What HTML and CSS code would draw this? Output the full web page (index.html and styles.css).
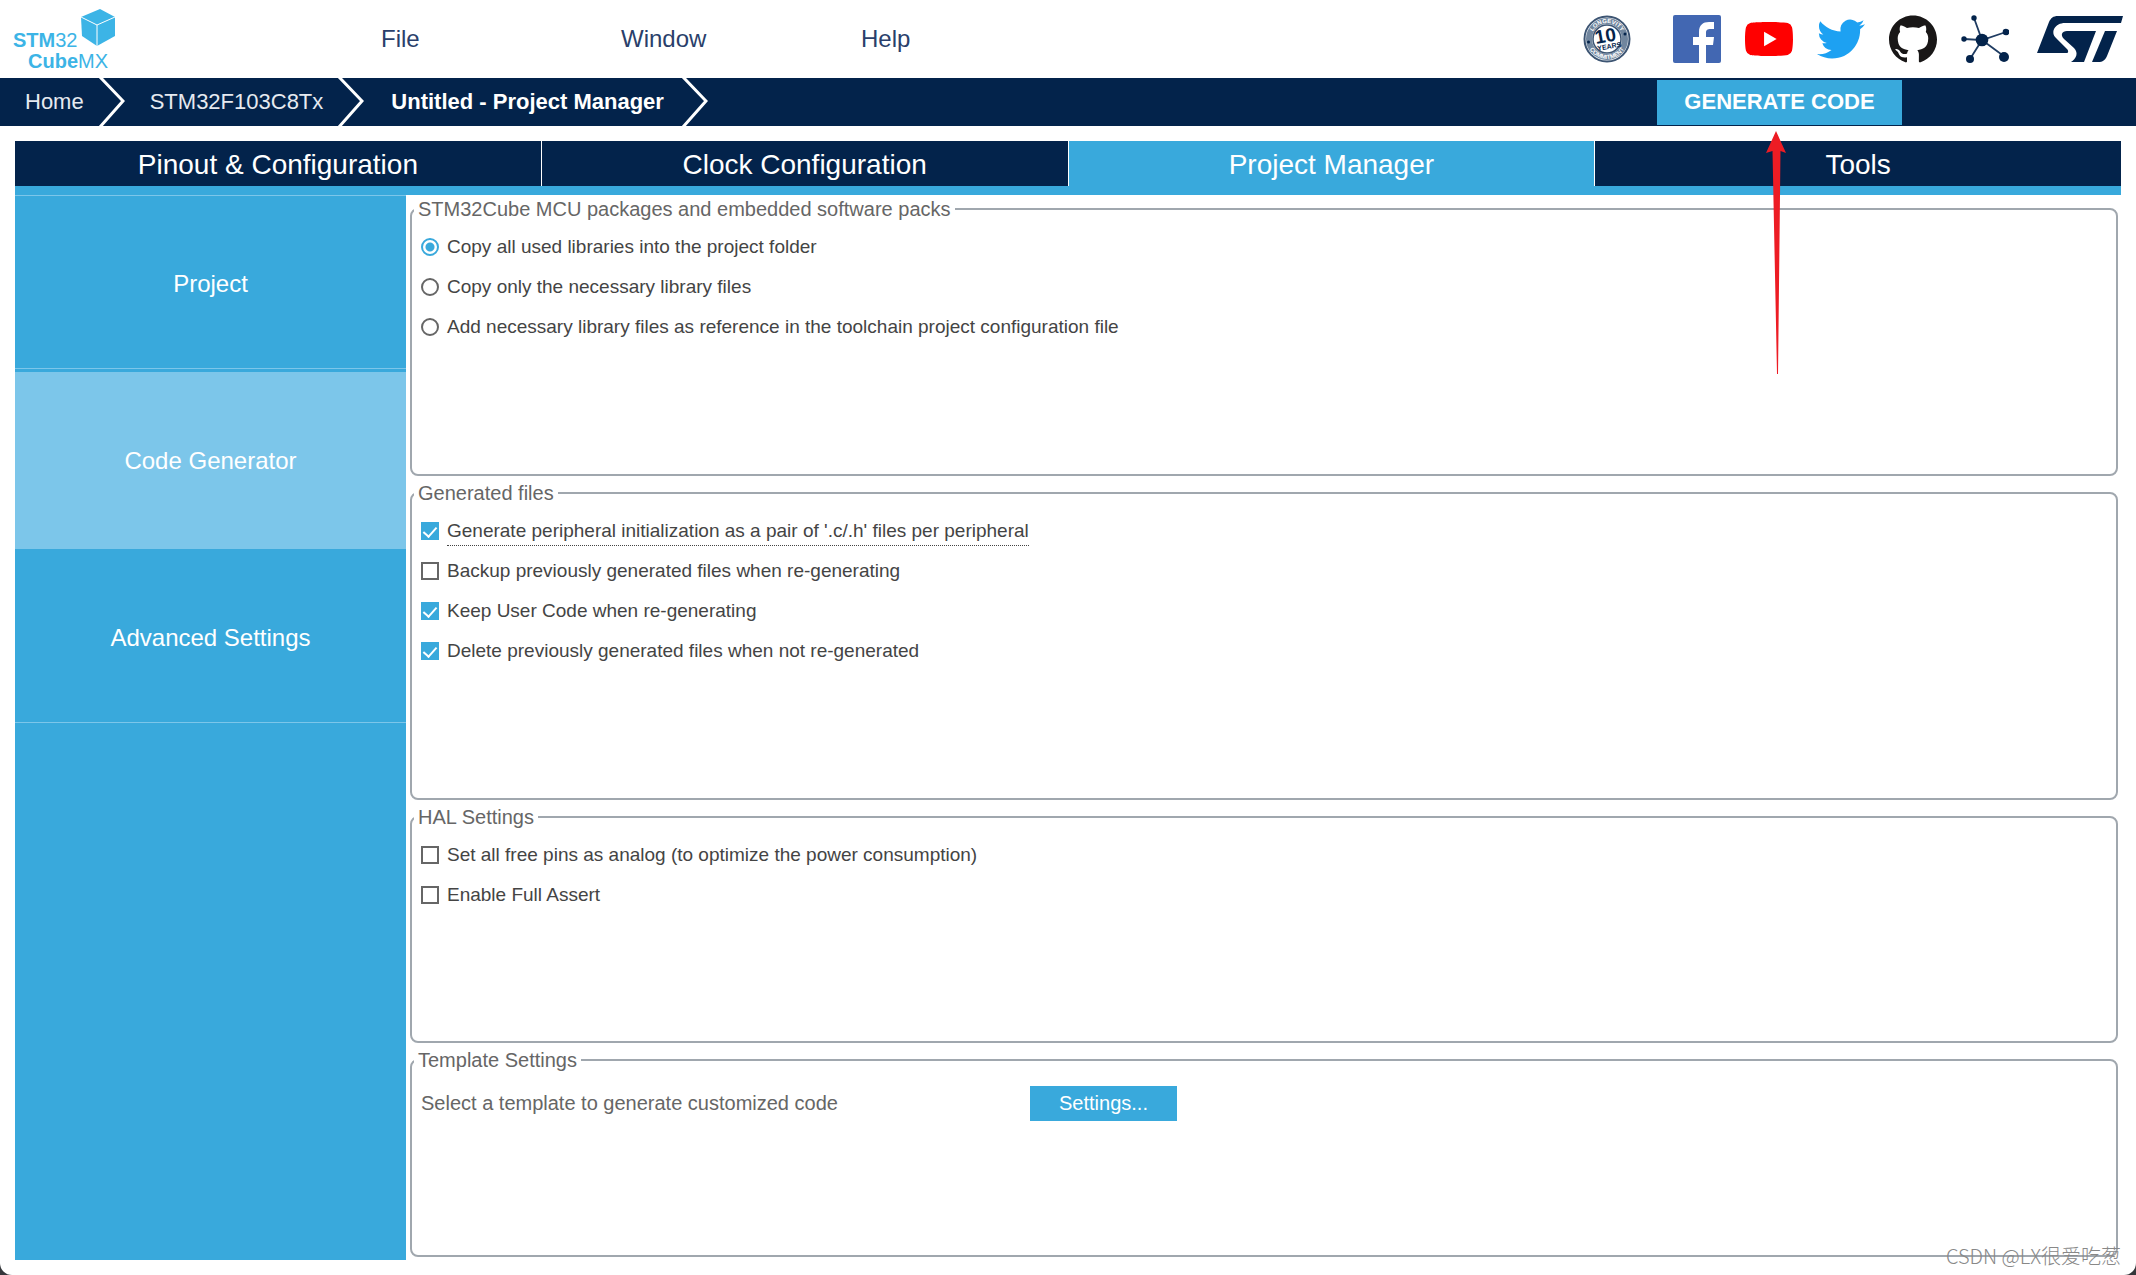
FILE: index.html
```html
<!DOCTYPE html>
<html lang="en">
<head>
<meta charset="utf-8">
<meta name="viewport" content="width=device-width, initial-scale=1">
<title>STM32CubeMX - Project Manager</title>
<link rel="stylesheet" href="styles.css">
</head>
<body>
<div class="app">
  <header class="topbar">
    <a class="logo" href="#" aria-label="STM32CubeMX">
      <svg width="120" height="78" viewBox="0 0 120 78">
        <g fill="#3cb4e6">
          <text class="logo-text" x="13" y="47"><tspan class="logo-bold">STM</tspan>32</text>
          <text class="logo-text" x="28" y="68"><tspan class="logo-bold">Cube</tspan>MX</text>
          <path d="M81 17 100 9 115 17 115 36 97 46 82 36Z"/>
        </g>
        <path d="M81 17 97 25 115 17M97 25V46" fill="none" stroke="#fff" stroke-width="1"/>
      </svg>
    </a>
    <nav class="menu" aria-label="Main menu">
      <a href="#">File</a>
      <a href="#">Window</a>
      <a href="#">Help</a>
    </nav>
    <div class="links">
      <a class="badge" href="#" aria-label="10 years longevity commitment">
        <svg width="48" height="48" viewBox="0 0 48 48">
          <defs>
            <path id="arc-top" d="M8 24a16 16 0 0 1 32 0"/>
            <path id="arc-bottom" d="M4 24a20 20 0 0 0 40 0"/>
          </defs>
          <circle cx="24" cy="24" r="22.500" fill="#f3f6f9" stroke="#3d5573" stroke-width="2"/>
          <circle cx="24" cy="24" r="18" fill="none" stroke="#71869e" stroke-width="6"/>
          <circle cx="24" cy="24" r="14" fill="#fff" stroke="#3d5573" stroke-width="1.500"/>
          <circle cx="5.500" cy="27" r="1.500" fill="#03234b"/>
          <circle cx="42" cy="19" r="1.500" fill="#03234b"/>
          <g fill="#fff" font-size="6" font-weight="bold" text-anchor="middle">
            <text><textPath href="#arc-top" startOffset="50%">LONGEVITY</textPath></text>
            <text><textPath href="#arc-bottom" startOffset="50%">COMMITMENT</textPath></text>
          </g>
          <g fill="#03234b" font-weight="bold" text-anchor="middle" transform="rotate(-10 24 24)">
            <text x="23" y="27" font-size="19">10</text>
            <text x="25" y="34" font-size="7">YEARS</text>
          </g>
        </svg>
      </a>
      <a href="#" aria-label="Facebook">
        <svg width="48" height="48" viewBox="0 0 48 48"><rect width="48" height="48" rx="2" fill="#4267b2"/><path d="M26 48V30h-6v-8h6v-5c0-7 4-10 10-10h5v7h-3c-4 0-5 1-5 4v4h8l-1 8h-7v18z" fill="#fff"/></svg>
      </a>
      <a href="#" aria-label="YouTube">
        <svg width="48" height="48" viewBox="0 0 24 24"><path fill="#f00" d="M23.498 6.186a3.016 3.016 0 0 0-2.122-2.136C19.505 3.545 12 3.545 12 3.545s-7.505 0-9.377.505A3.017 3.017 0 0 0 .502 6.186C0 8.070 0 12 0 12s0 3.930.502 5.814a3.016 3.016 0 0 0 2.122 2.136c1.871.505 9.376.505 9.376.505s7.505 0 9.377-.505a3.015 3.015 0 0 0 2.122-2.136C24 15.930 24 12 24 12s0-3.930-.502-5.814z"/><path fill="#fff" d="M9.545 15.568V8.432L15.818 12z"/></svg>
      </a>
      <a href="#" aria-label="Twitter">
        <svg width="48" height="48" viewBox="0 0 24 24"><path fill="#1da1f2" d="M23.953 4.570a10 10 0 01-2.825.775 4.958 4.958 0 002.163-2.723c-.951.555-2.005.959-3.127 1.184a4.920 4.920 0 00-8.384 4.482C7.690 8.095 4.067 6.130 1.640 3.162a4.822 4.822 0 00-.666 2.475c0 1.710.870 3.213 2.188 4.096a4.904 4.904 0 01-2.228-.616v.060a4.923 4.923 0 003.946 4.827 4.996 4.996 0 01-2.212.085 4.936 4.936 0 004.604 3.417 9.867 9.867 0 01-6.102 2.105c-.390 0-.779-.023-1.170-.067a13.995 13.995 0 007.557 2.209c9.053 0 13.998-7.496 13.998-13.985 0-.210 0-.420-.015-.630A9.935 9.935 0 0024 4.590z"/></svg>
      </a>
      <a href="#" aria-label="GitHub">
        <svg width="48" height="48" viewBox="0 0 24 24"><path fill="#191717" d="M12 .297c-6.630 0-12 5.373-12 12 0 5.303 3.438 9.800 8.205 11.385.600.113.820-.258.820-.577 0-.285-.010-1.040-.015-2.040-3.338.724-4.042-1.610-4.042-1.610C4.422 18.070 3.633 17.700 3.633 17.700c-1.087-.744.084-.729.084-.729 1.205.084 1.838 1.236 1.838 1.236 1.070 1.835 2.809 1.305 3.495.998.108-.776.417-1.305.760-1.605-2.665-.300-5.466-1.332-5.466-5.930 0-1.310.465-2.380 1.235-3.220-.135-.303-.540-1.523.105-3.176 0 0 1.005-.322 3.300 1.230.960-.267 1.980-.399 3-.405 1.020.006 2.040.138 3 .405 2.280-1.552 3.285-1.230 3.285-1.230.645 1.653.240 2.873.120 3.176.765.840 1.230 1.910 1.230 3.220 0 4.610-2.805 5.625-5.475 5.920.420.360.810 1.096.810 2.220 0 1.606-.015 2.896-.015 3.286 0 .315.210.690.825.570C20.565 22.092 24 17.592 24 12.297c0-6.627-5.373-12-12-12"/></svg>
      </a>
      <a href="#" aria-label="ST community">
        <svg width="48" height="48" viewBox="0 0 48 48" fill="#03234b"><path d="M13 3 21 25 45 17M3 24l18 1L9 44M21 25l23 17" fill="none" stroke="#1f3c62" stroke-width="1.800"/><circle cx="21" cy="25" r="6.300"/><circle cx="13" cy="3" r="2.700"/><circle cx="45" cy="17" r="3.300"/><circle cx="3" cy="24" r="2.700"/><circle cx="9" cy="44" r="4"/><circle cx="43" cy="42" r="5"/></svg>
      </a>
      <a class="st" href="#" aria-label="STMicroelectronics">
        <svg width="86" height="48" viewBox="0 0 86 48" fill="#03234b"><path d="M86 1 84 8H28C18 8 13 17 19 23L30 34C32 36 31 38 30 38H0L12 7C14 3 16 1 21 1Z"/><path d="M30 16H59L47 47H34C39 44 42 38 37 33L27 24C23 20 25 16 30 16Z"/><path d="M68 16H80L70 41C68 45 66 47 61 47H55Z"/></svg>
      </a>
    </div>
  </header>

  <div class="crumbbar">
    <nav class="crumbs" aria-label="Breadcrumb">
      <a href="#">Home</a>
      <svg width="27" height="48" viewBox="0 0 27 48"><path d="M2-1 25 23 2 49" /></svg>
      <a href="#">STM32F103C8Tx</a>
      <svg width="27" height="48" viewBox="0 0 27 48"><path d="M2-1 25 23 2 49" /></svg>
      <a class="current" href="#" aria-current="page">Untitled - Project Manager</a>
      <svg width="27" height="48" viewBox="0 0 27 48"><path d="M2-1 25 23 2 49" /></svg>
    </nav>
    <div class="generate-wrap">
      <button class="generate" type="button">GENERATE CODE</button>
      <svg class="arrow" width="22" height="244" viewBox="0 0 22 244"><path d="M10 0 20 22 14.500 20 12 243H11L6.500 20 0 22Z" fill="#ed1c24"/></svg>
    </div>
  </div>

  <main class="workspace">
    <nav class="tabs" aria-label="Views">
      <button type="button">Pinout &amp; Configuration</button>
      <button type="button">Clock Configuration</button>
      <button class="active" type="button">Project Manager</button>
      <button type="button">Tools</button>
    </nav>
    <div class="body">
      <nav class="side" aria-label="Project manager sections">
        <button class="lined" type="button">Project</button>
        <button class="selected" type="button">Code Generator</button>
        <button class="lined" type="button">Advanced Settings</button>
      </nav>
      <form class="panels">
        <fieldset>
          <legend>STM32Cube MCU packages and embedded software packs</legend>
          <label class="row"><input type="radio" name="lib" checked><span>Copy all used libraries into the project folder</span></label>
          <label class="row"><input type="radio" name="lib"><span>Copy only the necessary library files</span></label>
          <label class="row"><input type="radio" name="lib"><span>Add necessary library files as reference in the toolchain project configuration file</span></label>
        </fieldset>
        <fieldset>
          <legend>Generated files</legend>
          <label class="row"><input type="checkbox" checked><span class="focused">Generate peripheral initialization as a pair of '.c/.h' files per peripheral</span></label>
          <label class="row"><input type="checkbox"><span>Backup previously generated files when re-generating</span></label>
          <label class="row"><input type="checkbox" checked><span>Keep User Code when re-generating</span></label>
          <label class="row"><input type="checkbox" checked><span>Delete previously generated files when not re-generated</span></label>
        </fieldset>
        <fieldset>
          <legend>HAL Settings</legend>
          <label class="row"><input type="checkbox"><span>Set all free pins as analog (to optimize the power consumption)</span></label>
          <label class="row"><input type="checkbox"><span>Enable Full Assert</span></label>
        </fieldset>
        <fieldset>
          <legend>Template Settings</legend>
          <div class="template">
            <span>Select a template to generate customized code</span>
            <button type="button">Settings...</button>
          </div>
        </fieldset>
      </form>
    </div>
  </main>
  <div class="watermark">CSDN @LX很爱吃葱</div>
</div>
</body>
</html>
```
FILE: styles.css
```css
:root {
  --navy: #03234b;
  --blue: #39a9dc;
  --light: #7cc6ea;
  --line: #a0a7ae;
}

* {
  box-sizing: border-box;
}

body {
  margin: 0;
  background: #35373b;
  font-family: "Liberation Sans", Arial, "Noto Sans CJK SC", sans-serif;
  font-size: 20px;
  color: #444;
}

a {
  color: inherit;
  text-decoration: none;
}

button {
  margin: 0;
  padding: 0;
  border: 0;
  border-radius: 0;
  background: var(--blue);
  color: #fff;
  font: inherit;
}

svg {
  display: block;
}

.app {
  position: relative;
  display: flex;
  flex-direction: column;
  min-height: 100vh;
  background: #fff;
  border-radius: 0 0 12px 12px;
}

/* Header */
.topbar {
  display: flex;
  height: 78px;
}

.logo {
  width: 381px;
}

.logo-text {
  font-size: 20px;
}

.logo-bold {
  font-weight: bold;
}

.menu {
  display: flex;
  flex: 1;
  align-items: center;
  font-size: 24px;
  color: #2a3f6b;
}

.menu a {
  width: 240px;
}

.links {
  display: flex;
  align-items: center;
  gap: 24px;
  padding-right: 13px;
}

.badge {
  margin-right: 18px;
}

.st {
  margin-left: 4px;
}

/* Breadcrumb */
.crumbbar {
  display: flex;
  justify-content: space-between;
  height: 48px;
  background: var(--navy);
  font-size: 22px;
}

.crumbs {
  display: flex;
  align-items: center;
  color: #e6eaf0;
}

.crumbs a {
  padding: 0 14px 0 25px;
}

.crumbs .current {
  padding: 0 17px 0 27px;
  font-weight: bold;
  color: #fff;
}

.crumbs path {
  fill: none;
  stroke: #fff;
  stroke-width: 3;
}

.generate-wrap {
  position: relative;
  display: flex;
  align-items: center;
  margin-right: 234px;
}

.generate {
  width: 245px;
  height: 45px;
  font-weight: bold;
}

.arrow {
  position: absolute;
  top: 53px;
  left: 109px;
  z-index: 2;
}

/* Workspace */
.workspace {
  display: flex;
  flex: 1;
  flex-direction: column;
  padding: 15px;
}

.tabs {
  display: grid;
  grid-template-columns: repeat(4, 1fr);
  gap: 1px;
  border-bottom: 9px solid var(--blue);
}

.tabs button {
  height: 45px;
  padding-top: 2px;
  background: var(--navy);
  font-size: 28px;
}

.tabs .active {
  background: var(--blue);
}

.body {
  display: flex;
  flex: 1;
  gap: 4px;
}

.side {
  display: flex;
  flex-direction: column;
  width: 391px;
  background: var(--blue);
  box-shadow: inset 0 1px var(--light);
}

.side button {
  height: 177px;
  background: transparent;
  font-size: 24px;
}

.side .lined {
  box-shadow: inset 0 -3px var(--blue), inset 0 -4px var(--light);
}

.side .selected {
  background: var(--light);
}

.panels {
  display: grid;
  flex: 1;
  grid-template-rows:
    minmax(min-content, 279fr)
    minmax(min-content, 319fr)
    minmax(min-content, 238fr)
    minmax(min-content, 209fr);
  gap: 5px;
  padding: 2px 3px 3px 0;
}

fieldset {
  min-width: 0;
  margin: 0;
  padding: 6px 9px;
  border: 2px solid var(--line);
  border-radius: 8px;
}

legend {
  margin-left: -7px;
  padding: 0 4px;
  line-height: 24px;
  color: #666;
}

.row {
  display: flex;
  align-items: center;
  gap: 8px;
  height: 40px;
  font-size: 19px;
}

.row span {
  line-height: 28px;
}

.row .focused {
  border-bottom: 1px dotted #444;
}

.row input {
  appearance: none;
  flex: none;
  width: 18px;
  height: 18px;
  margin: 0;
  border: 2px solid #666;
  background: #fff;
}

.row input[type="radio"] {
  border-radius: 50%;
}

.row input[type="radio"]:checked {
  border-color: var(--blue);
  background: radial-gradient(circle, var(--blue) 4px, #fff 5px);
}

.row input[type="checkbox"]:checked {
  display: grid;
  place-items: center;
  border-color: var(--blue);
  background: var(--blue);
}

.row input[type="checkbox"]:checked::after {
  content: "";
  width: 6px;
  height: 11px;
  margin-bottom: 3px;
  border: solid #fff;
  border-width: 0 2px 2px 0;
  transform: rotate(42deg);
}

.template {
  display: grid;
  grid-template-columns: 609px 147px;
  align-items: center;
  padding-top: 8px;
  color: #666;
}

.template button {
  height: 35px;
}

.watermark {
  position: absolute;
  right: 15px;
  bottom: 5px;
  font-family: "Noto Sans CJK SC", sans-serif;
  font-weight: 300;
  line-height: 28px;
  color: #888;
}
```
